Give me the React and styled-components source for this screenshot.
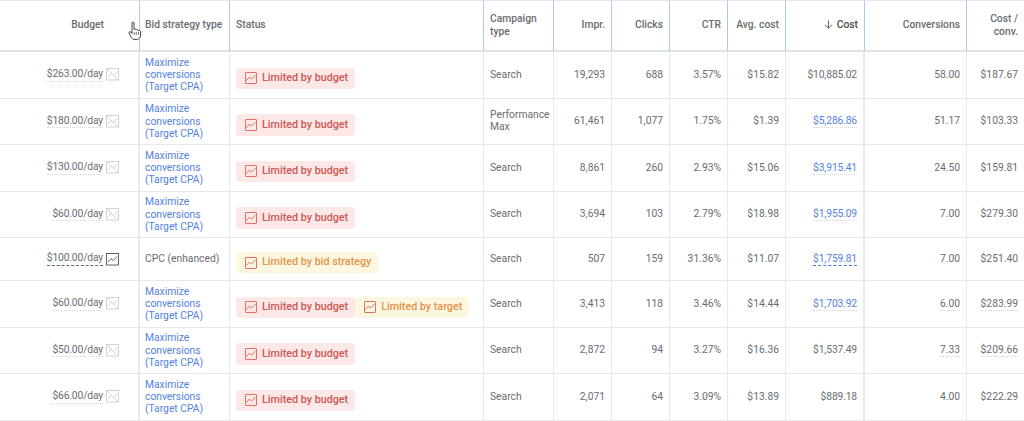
import React from "react";
import styled, { createGlobalStyle } from "styled-components";

const Global = createGlobalStyle`
  html, body { margin: 0; padding: 0; background: #fff; }
  body { font-family: Roboto, "Liberation Sans", sans-serif; overflow: hidden; }
`;

const Page = styled.div`
  position: relative;
  width: 1024px;
  height: 421px;
  overflow: hidden;
`;

const Table = styled.table`
  width: 1024px;
  table-layout: fixed;
  border-collapse: separate;
  border-spacing: 0;
  font-size: 10.3px;
  line-height: 12.4px;
  color: #696d71;
`;

const Head = styled.th`
  height: 52px;
  padding: ${p => (p.$budget ? "0 35px 0 6px" : p.$tight ? "0 6px 0 5px" : "0 6px")};
  box-sizing: border-box;
  font-weight: 500;
  color: ${p => (p.$sorted ? "#4a4e52" : "#696d71")};
  text-align: ${p => (p.$left ? "left" : "right")};
  white-space: ${p => (p.$wrap ? "normal" : "nowrap")};
  border-top: 1px solid #e3e8f0;
  border-bottom: 2px solid #dfe2e7;
  border-right: ${p => (p.$last ? "0" : "1px solid #a9c9ee")};
`;

const Row = styled.tr`
  height: ${p => p.$h}px;
`;

const Cell = styled.td`
  padding: ${p => (p.$tight ? "0 6px 0 5px" : "0 6px")};
  box-sizing: border-box;
  text-align: ${p => (p.$left ? "left" : "right")};
  border-bottom: 1px solid #e6e8eb;
  border-right: ${p => (p.$last ? "0" : `${p.$thick ? 2 : 1}px solid #e8eaed`)};
  white-space: nowrap;
  letter-spacing: ${p => (p.$narrow ? "-0.15px" : "0")};
`;

const BudgetCell = styled(Cell)`
  padding: 0 19px 0 0;
`;

const BudgetWrap = styled.div`
  display: flex;
  justify-content: flex-end;
  align-items: center;
  gap: 3px;
`;

const Dashed = styled.span`
  border-bottom: 1px ${p => (p.$strong ? "dashed #5f6368" : "dotted #d4d6da")};
  line-height: 12.5px;
  letter-spacing: -0.15px;
`;

const BudgetIcon = styled.svg`
  width: 13px;
  height: 13px;
  flex: none;
`;

const LinkText = styled.span`
  color: #5582e0;
  white-space: normal;
  display: block;
  padding-top: 1px;
`;

const CostLink = styled.span`
  color: #5582e0;
  border-bottom: 1px ${p => (p.$strong ? "dashed #4a78dc" : "dotted #d4d6da")};
`;

const Under = styled.span`
  border-bottom: 1px dotted #d4d6da;
`;

const Badges = styled.div`
  display: flex;
  margin-top: 7px;
`;

const Badge = styled.span`
  display: inline-flex;
  align-items: center;
  height: 21.5px;
  padding: 0 7px 0 9px;
  gap: 5px;
  box-sizing: border-box;
  border-radius: 4px;
  font-weight: 500;
  font-size: 10.75px;
  background: ${p => (p.$tone === "red" ? "#fce8e6" : "#fef7e0")};
  color: ${p => (p.$tone === "red" ? "#cf5755" : "#e3934c")};
`;

const BadgeIcon = styled.svg`
  width: 12px;
  height: 12px;
  flex: none;
`;

const CursorIcon = styled.svg`
  position: absolute;
  left: 128px;
  top: 21px;
  width: 14px;
  height: 20px;
`;

const SortArrow = styled.svg`
  width: 9px;
  height: 9px;
  margin-right: 4px;
  vertical-align: -1px;
`;

const Chart = ({ color }) => (
  <BadgeIcon viewBox="0 0 12 12" fill="none" stroke={color} strokeWidth="1">
    <rect x="0.5" y="0.5" width="11" height="11" rx="0.5" />
    <path d="M1.5 8.5 L4.2 5.2 L6.5 7 L10.5 3" />
  </BadgeIcon>
);

const Budget = ({ active }) => {
  const c = active ? "#5f6368" : "#cfd2d6";
  return (
    <BudgetIcon viewBox="0 0 13 13" fill="none" stroke={c} strokeWidth="1">
      <rect x="0.5" y="0.5" width="12" height="11.5" />
      <path d="M2 9 L5 5.5 L7.5 7.5 L11 3.5" />
      {!active && <path d="M1 1 L12 12" />}
    </BudgetIcon>
  );
};

const rows = [
  { h: 46.5, b: "$263.00/day", status: ["b"], type: ["Search"], i: "19,293", c: "688", ctr: "3.57%", a: "$15.82", cost: "$10,885.02", conv: "58.00", cc: "$187.67" },
  { h: 46.5, b: "$180.00/day", status: ["b"], type: ["Performance", "Max"], i: "61,461", c: "1,077", ctr: "1.75%", a: "$1.39", cost: "$5,286.86", link: 1, conv: "51.17", cc: "$103.33" },
  { h: 46.5, b: "$130.00/day", status: ["b"], type: ["Search"], i: "8,861", c: "260", ctr: "2.93%", a: "$15.06", cost: "$3,915.41", link: 1, conv: "24.50", cc: "$159.81" },
  { h: 46.5, b: "$60.00/day", status: ["b"], type: ["Search"], i: "3,694", c: "103", ctr: "2.79%", a: "$18.98", cost: "$1,955.09", link: 1, conv: "7.00", cc: "$279.30" },
  { h: 43, b: "$100.00/day", active: 1, cpc: 1, status: ["s"], type: ["Search"], i: "507", c: "159", ctr: "31.36%", a: "$11.07", cost: "$1,759.81", link: 2, conv: "7.00", cc: "$251.40" },
  { h: 46.5, b: "$60.00/day", status: ["b", "t"], type: ["Search"], i: "3,413", c: "118", ctr: "3.46%", a: "$14.44", cost: "$1,703.92", link: 1, conv: "6.00", under: 1, cc: "$283.99" },
  { h: 46.5, b: "$50.00/day", status: ["b"], type: ["Search"], i: "2,872", c: "94", ctr: "3.27%", a: "$16.36", cost: "$1,537.49", conv: "7.33", under: 1, cc: "$209.66" },
  { h: 46.5, b: "$66.00/day", status: ["b"], type: ["Search"], i: "2,071", c: "64", ctr: "3.09%", a: "$13.89", cost: "$889.18", conv: "4.00", cc: "$222.29" },
];

const labels = {
  b: ["Limited by budget", "red", "#d9736c"],
  s: ["Limited by bid strategy", "yellow", "#d9736c"],
  t: ["Limited by target", "yellow", "#d9736c"],
};

const widths = [140, 90, 254, 70, 58, 58, 58, 58, 79, 102, 57];

export default function App() {
  return (
    <Page>
      <Global />
      <Table>
        <colgroup>
          {widths.map((w, i) => <col key={i} style={{ width: w }} />)}
        </colgroup>
        <thead>
          <tr>
            <Head $budget>Budget</Head>
            <Head $left $tight>Bid strategy type</Head>
            <Head $left>Status</Head>
            <Head $left $wrap>Campaign type</Head>
            <Head>Impr.</Head>
            <Head>Clicks</Head>
            <Head>CTR</Head>
            <Head>Avg. cost</Head>
            <Head $sorted>
              <SortArrow viewBox="0 0 9 9" fill="none" stroke="#5f6368" strokeWidth="1">
                <path d="M4.5 0.5 V8 M1 4.8 L4.5 8.2 L8 4.8" />
              </SortArrow>
              Cost
            </Head>
            <Head>Conversions</Head>
            <Head $last $wrap>Cost / conv.</Head>
          </tr>
        </thead>
        <tbody>
          {rows.map((r, i) => (
            <Row key={i} $h={r.h}>
              <BudgetCell $thick>
                <BudgetWrap>
                  <Dashed $strong={r.active}>{r.b}</Dashed>
                  <Budget active={r.active} />
                </BudgetWrap>
              </BudgetCell>
              <Cell $left $tight>
                {r.cpc ? "CPC (enhanced)" : <LinkText>Maximize conversions (Target CPA)</LinkText>}
              </Cell>
              <Cell $left>
                <Badges>
                  {r.status.map(s => (
                    <Badge key={s} $tone={labels[s][1]}>
                      <Chart color={labels[s][2]} />
                      {labels[s][0]}
                    </Badge>
                  ))}
                </Badges>
              </Cell>
              <Cell $left>{r.type.map((t, k) => <div key={k}>{t}</div>)}</Cell>
              <Cell>{r.i}</Cell>
              <Cell>{r.c}</Cell>
              <Cell>{r.ctr}</Cell>
              <Cell>{r.a}</Cell>
              <Cell $thick $narrow>
                {r.link ? <CostLink $strong={r.link === 2}>{r.cost}</CostLink> : r.cost}
              </Cell>
              <Cell>{r.under ? <Under>{r.conv}</Under> : r.conv}</Cell>
              <Cell $last>{r.under ? <Under>{r.cc}</Under> : r.cc}</Cell>
            </Row>
          ))}
        </tbody>
      </Table>
      <CursorIcon viewBox="0 0 14 20" fill="#fff" stroke="#3c4043" strokeWidth="1">
        <path d="M4 2 C4 0.8 6 0.8 6 2 V8.5 C6.5 7.8 8 7.8 8.3 8.8 C9 8.2 10.3 8.5 10.5 9.5 C11.2 9.2 12.6 9.6 12.6 11 V14 C12.6 16.5 11 18.5 8.5 18.5 H7 C5 18.5 4 17.5 3 16 L1 12 C0.6 11 1.8 10 2.8 11 L4 12.5 Z" />
        <path d="M6.2 11 V14 M8.3 11 V14 M10.5 11 V14" strokeWidth="0.7" />
      </CursorIcon>
    </Page>
  );
}
